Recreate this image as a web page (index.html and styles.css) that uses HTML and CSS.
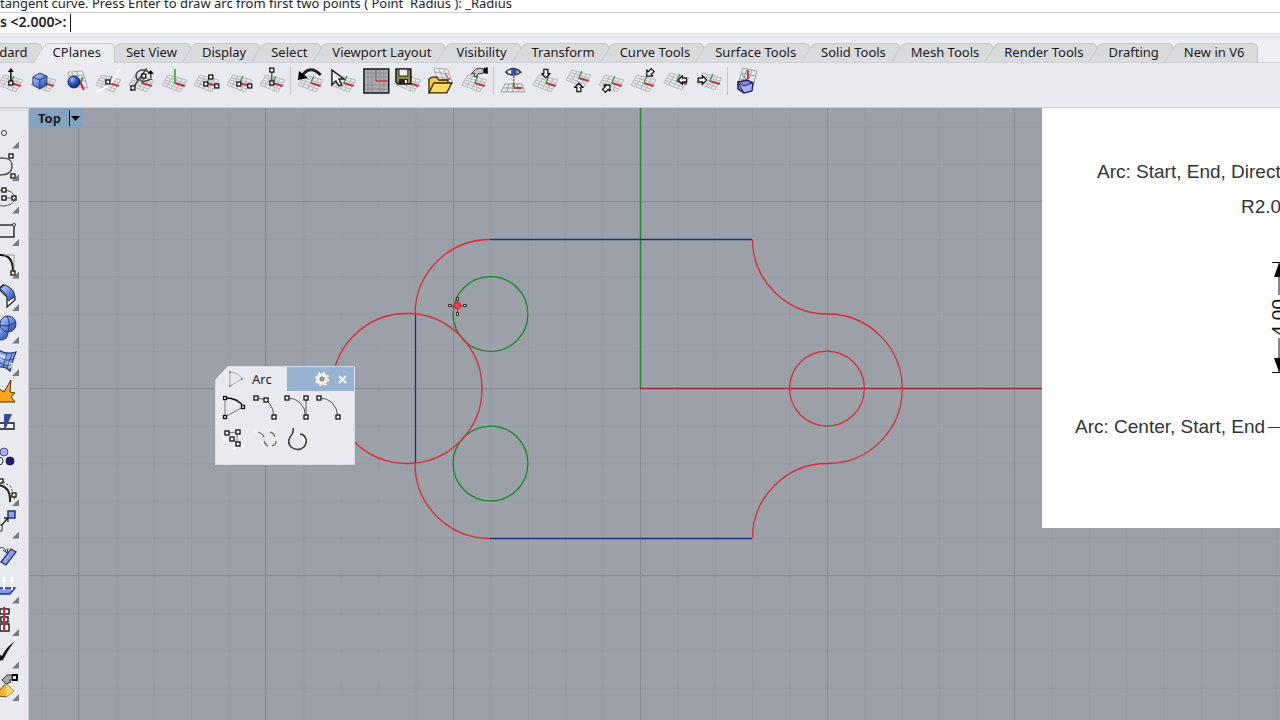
FILE: index.html
```
<!DOCTYPE html>
<html lang="en">
<head>
<meta charset="utf-8">
<title>Rhinoceros - Top</title>
<link rel="stylesheet" href="styles.css">
</head>
<body>
<svg class="defs" aria-hidden="true">
  <defs>
    <symbol id="mesh" viewBox="0 0 33 32">
      <path d="M10 10l19 5-7 12-18-7zM8.500 12.500l19 5.500M7 15l18.500 6M5.500 17.500l18 6.500M15 11.500l-6.500 10.500M20 12.500l-6.500 11.500M24.500 14l-6.500 11.500" fill="none" stroke="#b3b3b7"/>
    </symbol>
    <symbol id="axes" viewBox="0 0 33 32">
      <path d="M17 18l10 3" stroke="#c23440" stroke-width="2"/><path d="M17 18l3-7" stroke="#3da648" stroke-width="1.500"/>
    </symbol>
    <symbol id="plane" viewBox="0 0 33 32"><use href="#mesh"/><use href="#axes"/></symbol>
    <symbol id="arrow" viewBox="0 0 10 10"><path d="M3 .7h4v4.300h2.200L5 9.300.8 5H3z" fill="#fff" stroke="#111" stroke-width="1.300"/></symbol>
    <linearGradient id="blue" x1="0" y1="0" x2="1" y2="1"><stop offset="0" stop-color="#c6d6ff"/><stop offset=".5" stop-color="#6c8fe6"/><stop offset="1" stop-color="#1c3c9c"/></linearGradient>
    <radialGradient id="ball" cx=".35" cy=".3" r=".8"><stop offset="0" stop-color="#a9c4ff"/><stop offset=".4" stop-color="#3560cc"/><stop offset="1" stop-color="#0b1c62"/></radialGradient>
    <pattern id="minor" x="640" y="388.500" width="37.400" height="37.400" patternUnits="userSpaceOnUse"><path d="M0 0H37.400M0 0V37.400" stroke="#8c929b" stroke-width="1.500"/></pattern>
  </defs>
</svg>

<div class="app">
  <section class="command">
    <p class="history">tangent curve. Press Enter to draw arc from first two points ( Point&nbsp; Radius ): _Radius</p>
    <div class="prompt"><label for="cmd">s &lt;2.000&gt;:</label><input id="cmd" type="text"></div>
  </section>

  <nav class="tabs">
    <button class="tab">Standard</button><button class="tab active">CPlanes</button><button class="tab">Set View</button><button class="tab">Display</button><button class="tab">Select</button><button class="tab">Viewport Layout</button><button class="tab">Visibility</button><button class="tab">Transform</button><button class="tab">Curve Tools</button><button class="tab">Surface Tools</button><button class="tab">Solid Tools</button><button class="tab">Mesh Tools</button><button class="tab">Render Tools</button><button class="tab">Drafting</button><button class="tab">New in V6</button>
  </nav>

  <div class="toolbar">
    <button aria-label="Set CPlane origin"><svg viewBox="0 0 33 32"><use href="#plane"/><path d="M17 17V5" stroke="#111" stroke-width="1.500"/><path d="M14 7l3-4 3 4z"/><rect class="n" x="15" y="16" width="4" height="4"/></svg></button>
    <button aria-label="CPlane to object"><svg viewBox="0 0 33 32"><use href="#plane"/><path d="M6 12l7-4 7 3v9l-7 4-7-4z" fill="url(#blue)" stroke="#24346f"/><path d="M6 12l7 3 7-4M13 15v9" fill="none" stroke="#24346f"/></svg></button>
    <button aria-label="CPlane to surface"><svg viewBox="0 0 33 32"><path d="M9 7l15-1 5 17-17-2zM10 11l15-1M11 15l16 1M13 7l4 15M18 7l5 15" fill="none" stroke="#aaa"/><path d="M21 16l4 9" stroke="#c22" stroke-width="2"/><path d="M22 17l2-5" stroke="#393" stroke-width="2"/><circle cx="15" cy="17" r="6" fill="url(#ball)" stroke="#14245c"/></svg></button>
    <button aria-label="CPlane perpendicular to curve"><svg viewBox="0 0 33 32"><use href="#plane"/><path d="M4 27q14-3 24-23" fill="none" stroke="#fff" stroke-width="2"/><rect class="n" x="14" y="15" width="4" height="4"/></svg></button>
    <button aria-label="CPlane along curve"><svg viewBox="0 0 33 32"><use href="#plane"/><path d="M6 26L22 3M13 16q-5-8 3-11 6-1 10 4v4M14 14l4 3 9-3" fill="none" stroke="#444" stroke-width="1.500"/><path d="M23 9h6l-3-4z"/><rect class="n" x="6" y="21" width="4" height="4"/><rect class="n" x="17" y="9" width="4" height="4"/></svg></button>
    <button aria-label="World Top"><svg viewBox="0 0 33 32"><use href="#mesh"/><path d="M17 18l10 3" stroke="#c22" stroke-width="2"/><path d="M17 18V4" stroke="#49b044" stroke-width="2"/></svg></button>
    <button aria-label="CPlane three points"><svg viewBox="0 0 33 32"><use href="#plane"/><rect class="n" x="14" y="17" width="4" height="4"/><rect class="n" x="19" y="10" width="4" height="4"/><rect class="n" x="25" y="19" width="4" height="4"/></svg></button>
    <button aria-label="CPlane X axis"><svg viewBox="0 0 33 32"><use href="#plane"/><rect class="n" x="14" y="17" width="4" height="4"/><rect class="n" x="25" y="19" width="4" height="4"/></svg></button>
    <button aria-label="CPlane Z axis"><svg viewBox="0 0 33 32"><use href="#plane"/><path d="M16 17V6" stroke="#222"/><rect class="n" x="14" y="3" width="4" height="4"/><rect class="n" x="14" y="16" width="4" height="4"/></svg></button>
    <span class="sep"></span>
    <button aria-label="Previous CPlane"><svg viewBox="0 0 33 32"><use href="#plane"/><path d="M27 10Q16-1 8 11" fill="none" stroke="#222" stroke-width="3"/><path d="M5 6l9 7-10 2z"/></svg></button>
    <button aria-label="Select CPlane"><svg viewBox="0 0 33 32"><use href="#plane"/><path d="M5 5v15l4-4 3 5 3-1-3-6h5z" fill="#fff" stroke="#222" stroke-width="1.500"/></svg></button>
    <button aria-label="Named CPlanes"><svg viewBox="0 0 33 32"><path d="M4 4h25v24H4z" fill="#a9abb1" stroke="#171717" stroke-width="1.500"/><path d="M8 5v22M12 5v22M20 5v22M24 5v22M5 8h23M5 12h23M5 20h23M5 24h23" stroke="#85878c" stroke-width=".7"/><path d="M16 5v11" stroke="#38a33e" stroke-width="1.500"/><path d="M16 16h12" stroke="#c83b42" stroke-width="1.500"/></svg></button>
    <button aria-label="Save CPlane"><svg viewBox="0 0 33 32"><use href="#plane"/><path d="M4 4h15v15H6l-2-2z" fill="#8e8e43" stroke="#171717" stroke-width="1.500"/><path d="M7 4h9v7H7z" fill="#eee" stroke="#222"/><path d="M7 14h9v5H7z" fill="#222"/><path d="M13 15h2v3h-2z" fill="#eee"/></svg></button>
    <button aria-label="Open CPlane"><svg viewBox="0 0 33 32"><path d="M9 3l14 1 5 15-15-2zM10 7l15 2M12 12l15 2M14 4l6 14M19 4l6 14" fill="#eee" stroke="#aaa"/><path d="M20 9l5 6" stroke="#b33"/><path d="M4 28V14l3-2h5l2 3h9v5" fill="#f2cb42" stroke="#332600" stroke-width="1.300"/><path d="M4 28l5-10h18l-5 10z" fill="#ffda62" stroke="#332600" stroke-width="1.300"/></svg></button>
    <button aria-label="Edit CPlane"><svg viewBox="0 0 33 32"><use href="#plane"/><path d="M13 9l5-5q4-2 8 0v4l-6 1-1 3-3-1 1-3z" fill="#c4c4c8" stroke="#333"/><path d="M26 3l4-1v7l-4-1z"/></svg></button>
    <span class="sep"></span>
    <button aria-label="CPlane to view"><svg viewBox="0 0 33 32"><path d="M8 19h17l3 8H4zM6 23h21M12 19l-2 8M16 19v8M20 19l2 8" fill="none" stroke="#999"/><path d="M17 11v12" stroke="#222" stroke-dasharray="2 1"/><path d="M17 22v-4" stroke="#393" stroke-width="2"/><path d="M17 23h8" stroke="#b33" stroke-width="2"/><path d="M9 7q7-7 15 0-8 6-15 0z" fill="#fff" stroke="#333" stroke-width="1.500"/><circle cx="17" cy="7" r="3" fill="#314fb0"/></svg></button>
    <button aria-label="World top"><svg viewBox="0 0 33 32"><use href="#plane"/><use href="#arrow" x="12" y="3" width="10" height="11"/></svg></button>
    <button aria-label="World bottom"><svg viewBox="0 0 33 32"><use href="#plane" y="-5" width="33" height="32"/><g transform="rotate(180 17 23)"><use href="#arrow" x="12" y="18" width="10" height="11"/></g></svg></button>
    <button aria-label="World front"><svg viewBox="0 0 33 32"><use href="#plane"/><g transform="rotate(-135 12 23)"><use href="#arrow" x="7" y="18" width="10" height="10"/></g></svg></button>
    <button aria-label="World back"><svg viewBox="0 0 33 32"><use href="#plane"/><g transform="rotate(45 23 8)"><use href="#arrow" x="18" y="3" width="10" height="10"/></g></svg></button>
    <button aria-label="World right"><svg viewBox="0 0 33 32"><use href="#plane" y="-2" width="33" height="32"/><g transform="rotate(90 23 15)"><use href="#arrow" x="18" y="10" width="10" height="11"/></g></svg></button>
    <button aria-label="World left"><svg viewBox="0 0 33 32"><use href="#plane" y="-2" width="33" height="32"/><g transform="rotate(-90 9 15)"><use href="#arrow" x="4" y="10" width="10" height="11"/></g></svg></button>
    <span class="sep"></span>
    <button aria-label="Universal CPlanes"><svg viewBox="0 0 33 32"><path d="M12 3l14 3-4 17-15-4zM11 8l14 3M9 14l14 3M16 4l-5 15M21 5l-5 16" fill="#eee" stroke="#999"/><path d="M17 5v9" stroke="#b33" stroke-width="2"/><path d="M11 9l5 6" stroke="#393"/><path d="M7 17l9-2 6 3-1 8-8 2-6-4z" fill="#8284df" stroke="#202354" stroke-width="1.500"/><path d="M7 17l6 4 9-3-1 8-8 2z" fill="#aaaeff" stroke="#202354"/></svg></button>
  </div>

  <main class="workspace">
    <aside class="side">
      <button class="more" aria-label="Point"><svg viewBox="0 0 29 32"><circle cx="4" cy="16" r="2.500" fill="#fff" stroke="#333"/></svg></button>
      <button class="more" aria-label="Curve"><svg viewBox="0 0 29 32"><path d="M0 8q12-1 12 8t-12 9" fill="none" stroke="#555" stroke-width="1.500"/><rect class="n" x="9" y="4" width="4" height="4"/><rect class="n" x="11" y="24" width="4" height="4"/></svg></button>
      <button class="more" aria-label="Ellipse"><svg viewBox="0 0 29 32"><ellipse cx="3" cy="16" rx="12" ry="8" fill="none" stroke="#555"/><path d="M4 16h10" stroke="#555"/><rect class="n" x="2" y="6" width="4" height="4"/><rect class="n" x="2" y="14" width="4" height="4"/><rect class="n" x="12" y="14" width="4" height="4"/></svg></button>
      <button class="more" aria-label="Rectangle"><svg viewBox="0 0 29 32"><path d="M-2 10h16v12H-2z" fill="none" stroke="#333" stroke-width="1.500"/><circle cx="14" cy="10" r="1.500" fill="#fff" stroke="#333"/></svg></button>
      <button class="more" aria-label="Fillet"><svg viewBox="0 0 29 32"><path d="M-1 8q14-1 14 16" fill="none" stroke="#111" stroke-width="2"/><path d="M4 8h10v15" fill="none" stroke="#999"/><rect class="n" x="11" y="24" width="4" height="4"/></svg></button>
      <button class="more" aria-label="Surface"><svg viewBox="0 0 29 32"><path d="M-1 9l4-4q12 3 12 15l-8 7V17z" fill="#fff" stroke="#222" stroke-width="1.300"/><path d="M0 9l5-4q9 4 10 12l-7 4Q7 13 0 9z" fill="url(#blue)" stroke="#263b79"/></svg></button>
      <button class="more" aria-label="Solid"><svg viewBox="0 0 29 32"><circle cx="1" cy="21" r="7" fill="url(#blue)" stroke="#24346f"/><circle cx="8" cy="12" r="8" fill="url(#blue)" stroke="#24346f"/><path d="M1 13q7 3 14-3M7 4q4 7 1 16" fill="none" stroke="#24346f"/></svg></button>
      <button class="more" aria-label="Mesh"><svg viewBox="0 0 29 32"><path d="M-1 5q7 5 17 2-3 7-6 19-5-5-11-4z" fill="#86a3ee" stroke="#24346f" stroke-width="1.300"/><path d="M0 9l7 2-2 5-5-1zM8 17l5 1-2 5-4-2z" fill="#d3deff"/><path d="M-1 12q6 5 14 2M-1 17q6 5 12 3M7 8L3 22M12 8L7 23" fill="none" stroke="#24346f" stroke-width=".8"/></svg></button>
      <button aria-label="Explode"><svg viewBox="0 0 29 32"><path d="M-1 12l5 3 7-12-1 12 5 1-4 4 4 5H-1z" fill="#fda51b" stroke="#3b301c"/></svg></button>
      <button aria-label="Trim"><svg viewBox="0 0 29 32"><path d="M-2 13h16v6H-2z" fill="#fff" stroke="#111" stroke-width="1.300"/><path d="M4 4h8L6 18H4z" fill="#354f9e"/></svg></button>
      <button aria-label="Group"><svg viewBox="0 0 29 32"><circle cx="4" cy="10" r="4" fill="#aaa9ef" stroke="#53528d"/><circle cx="-1" cy="19" r="4" fill="#fff" stroke="#333"/><circle cx="10" cy="19" r="4" fill="#221f73" stroke="#15144e"/></svg></button>
      <button class="more" aria-label="Control points"><svg viewBox="0 0 29 32"><path d="M-1 10q12 2 11 17" fill="none" stroke="#222" stroke-width="2"/><path d="M0 4l11 8 4 13" fill="none" stroke="#333" stroke-dasharray="2 2"/><rect class="n" x="-1" y="4" width="4" height="4"/><rect class="n" x="12" y="18" width="4" height="4"/></svg></button>
      <button class="more" aria-label="Scale"><svg viewBox="0 0 29 32"><path d="M0 20l8-9M4 11h4v4" fill="none" stroke="#222" stroke-width="1.300"/><path d="M8 4h7v7H8z" fill="#86a3f2" stroke="#24346f" stroke-width="1.500"/><path d="M-2 18h4v6h-4z" fill="#fff" stroke="#222"/></svg></button>
      <button aria-label="Rotate"><svg viewBox="0 0 29 32"><path d="M1 22L11 9l5 3L6 25z" fill="#8aa3e8" stroke="#24346f" stroke-width="1.300"/><path d="M-1 8q6-2 7 4M3 10l4 3 1-5" fill="none" stroke="#333"/></svg></button>
      <button class="more" aria-label="Project"><svg viewBox="0 0 29 32"><path d="M-1 16h16l-5 6H-1z" fill="#799aeb" stroke="#24346f" stroke-width="1.300"/><path d="M4 18V5M12 18V5" stroke="#fff" stroke-width="2"/></svg></button>
      <button class="more" aria-label="Align"><svg viewBox="0 0 29 32"><path d="M0 4h9v5H0zM1 12h7v5H1zM0 19h9v7H0z" fill="#fff" stroke="#222" stroke-width="1.500"/><path d="M4 2v25" stroke="#e21d2f" stroke-width="2"/></svg></button>
      <button class="more" aria-label="Check"><svg viewBox="0 0 29 32"><path d="M-1 17l3 2Q7 9 14 5 8 13 3 23L-1 24z" fill="#171717"/></svg></button>
      <button class="more" aria-label="Edit object"><svg viewBox="0 0 29 32"><path d="M-1 21l7-8 8 8-8 6-7-1z" fill="#f9b62c" stroke="#694d0b"/><path d="M6 13v14l8-6z" fill="#ffd474"/><path d="M2 10l5-5h5v5H9l2 2-5 2z" fill="#aaa" stroke="#333"/><path d="M12 4h6v7h-6z"/><path d="M13 6h3v3h-3z" fill="#fff"/></svg></button>
    </aside>

    <section class="viewport">
      <svg class="canvas" viewBox="29 108 1251 612" preserveAspectRatio="xMinYMin slice" role="img" aria-label="Top view drawing">
        <rect x="29" y="108" width="1251" height="612" fill="url(#minor)" opacity=".5"/>
        <path d="M78.500 108v612M265.500 108v612M453.500 108v612M827.500 108v612M1014.500 108v612M640.500 388v332M29 201.500h1251M29 575.500h1251M29 388.500h611" stroke="#838992"/>
        <path d="M640.500 108v280" stroke="#1b8c27" stroke-width="1.500"/>
        <path d="M640 388.500h640" stroke="#a12a34" stroke-width="1.500"/>
        <g fill="none" stroke-width="1.300">
          <path d="M490 239.500h262M490 538.500h262M415.500 314v149" stroke="#1c3182"/>
          <g stroke="#108c22"><circle cx="490.500" cy="314" r="37.400"/><circle cx="490.500" cy="463.500" r="37.400"/></g>
          <g stroke="#e02630">
            <path d="M490 239.500a75 75 0 0 0-75 75M415 463.500a75 75 0 0 0 75 75M752.500 239.500a75 75 0 0 0 75 74.500a74 74 0 0 1 0 149.500a75 75 0 0 0-75 75"/>
            <circle cx="407" cy="388.500" r="75"/><circle cx="827" cy="388.500" r="37.400"/>
          </g>
        </g>
        <path d="M450 306h14M457.500 299v14" stroke="#ec1c28"/><circle cx="457.500" cy="305.500" r="3" fill="#f07a80" stroke="#ec1c28" stroke-width="1.500"/><path d="M454 305.500h7M457.500 302v7" stroke="#ec1c28"/>
        <path d="M448.500 304.500h3v2h-3zM463.500 304.500h3v2h-3zM456.500 297.500h2v3h-2zM456.500 312.500h2v3h-2z" fill="#fff" stroke="#222"/>
      </svg>

      <button class="view-title"><span>Top</span><svg viewBox="0 0 12 16"><path d="M.5 0v16" stroke="#17202c"/><path d="M2 6h9L6.500 11z"/></svg></button>

      <figure class="reference">
        <svg viewBox="0 0 238 420" font-family="Liberation Sans, sans-serif" font-size="19" fill="#333">
          <text x="55" y="70">Arc: Start, End, Direct</text>
          <text x="199" y="105">R2.0</text>
          <text x="33" y="325">Arc: Center, Start, End</text>
          <path d="M226 319.500h12" stroke="#333"/>
          <path d="M230 154.500h8M230 264.500h8M237 155v32M237 230v34" stroke="#111" fill="none"/>
          <path d="M237 155l-5 14h10zM237 264l-5-14h10z" fill="#000"/>
          <text transform="translate(243 228) rotate(-90)" fill="#111">4.00</text>
        </svg>
      </figure>

      <section class="palette">
        <header>
          <h2><svg viewBox="0 0 16 18"><path d="M2 2q9 1 12 7L2 16z" fill="none" stroke="#aaa"/><circle cx="2" cy="2" r="1" fill="#777"/><circle cx="14" cy="9" r="1" fill="#777"/><circle cx="2" cy="16" r="1" fill="#777"/></svg>Arc</h2>
          <div class="bar">
            <button aria-label="Options"><svg viewBox="0 0 16 16"><circle cx="8" cy="8" r="6" fill="none" stroke="#77736b" stroke-width="3" stroke-dasharray="2.700 2"/><circle cx="8" cy="8" r="4" fill="none" stroke="#f4efe3" stroke-width="4"/><circle cx="8" cy="8" r="6.500" fill="none" stroke="#f4efe3" stroke-width="2" stroke-dasharray="2.700 2.400"/><circle cx="8" cy="8" r="2" fill="#97aecb" stroke="#77736b"/></svg></button>
            <button aria-label="Close"><svg viewBox="0 0 16 16"><path d="M5 5l7 7M12 5l-7 7" stroke="#eef4ff" stroke-width="2"/></svg></button>
          </div>
        </header>
        <div class="tools">
          <button aria-label="Arc: center, start, angle"><svg viewBox="0 0 32 32"><path d="M7 26V7M7 26l18-10" fill="none" stroke="#777"/><path d="M7 7q14 0 18 9" fill="none" stroke="#111" stroke-width="1.500"/><rect class="n" x="5.500" y="5.500" width="3" height="3"/><rect class="n" x="23.500" y="14.500" width="3" height="3"/><rect class="n" x="5.500" y="24.500" width="3" height="3"/></svg></button>
          <button aria-label="Arc: three points"><svg viewBox="0 0 32 32"><path d="M6 7q17 0 18 19" fill="none" stroke="#555"/><rect class="n" x="4" y="5" width="4" height="4"/><rect class="n" x="14" y="7" width="4" height="4"/><rect class="n" x="22" y="24" width="4" height="4"/></svg></button>
          <button aria-label="Arc: start, end, direction"><svg viewBox="0 0 32 32"><path d="M5 7q17 0 19 19V7" fill="none" stroke="#555"/><rect class="n" x="3" y="5" width="4" height="4"/><rect class="n" x="22" y="5" width="4" height="4"/><rect class="n" x="22" y="24" width="4" height="4"/></svg></button>
          <button aria-label="Arc: start, end, radius"><svg viewBox="0 0 32 32"><path d="M5 7q17 0 19 19" fill="none" stroke="#555"/><rect class="n" x="3" y="5" width="4" height="4"/><rect class="n" x="22" y="24" width="4" height="4"/></svg></button>
          <button aria-label="Arc through points"><svg viewBox="0 0 32 32"><path d="M4 14l4-1M13 4l1 3M5 18l4-2M16 27l1-4M24 22l3 2" stroke="#fff" stroke-width="2"/><path d="M9 10l10-1v11l-6-5" fill="none" stroke="#777"/><rect class="n" x="7" y="8" width="4" height="4"/><rect class="n" x="18" y="7" width="4" height="4"/><rect class="n" x="12" y="14" width="4" height="4"/><rect class="n" x="18" y="19" width="4" height="4"/></svg></button>
          <button aria-label="Arc blend"><svg viewBox="0 0 32 32"><path d="M4 8q8 1 9 8M27 16q-1-7-8-9M12 18l3 5M26 18l-3 5" fill="none" stroke="#fff" stroke-width="2"/><path d="M8 9q5 2 6 5M14 18q1 4 4 5M22 23q4-1 4-5M25 14q-1-4-5-5" fill="none" stroke="#666" stroke-width="1.300"/></svg></button>
          <button aria-label="Convert to arcs"><svg viewBox="0 0 32 32"><path d="M14 12a6 6 0 0 1 8 8" fill="none" stroke="#fff" stroke-width="3"/><path d="M11 5q1 5-3 9-3 6 1 10 7 5 13 0 4-5 1-10-2-3-5-3" fill="none" stroke="#333" stroke-width="1.500"/></svg></button>
        </div>
      </section>
    </section>
  </main>
</div>
</body>
</html>
```
FILE: styles.css
```
* { box-sizing: border-box; }
body { margin: 0; background: #e9eaf0; color: #1d1d1f; font-family: "Noto Sans", "Open Sans", sans-serif; font-size: 13px; overflow: hidden; }
button { border: 0; padding: 0; background: none; color: inherit; font: inherit; }
svg { display: block; }
.defs { position: absolute; width: 0; height: 0; }
.n { fill: #fff; stroke: #111; stroke-width: 1.3px; }
.app { display: flex; flex-direction: column; height: 100vh; }

.command { background: #fff; border-bottom: 1px solid #dddee3; }
.history { margin: 0; height: 13px; line-height: 18px; display: flex; align-items: flex-end; white-space: pre; border-bottom: 1px solid #c9cacd; overflow: hidden; }
.prompt { display: flex; align-items: center; height: 20px; gap: 4px; font-size: 14px; font-weight: 600; }
.prompt label { line-height: 16px; padding-bottom: 2px; }
.prompt input { flex: 1; height: 18px; border: 0; border-left: 1px solid #111; padding: 0 2px; background: none; outline: 0; font: inherit; }

.tabs { display: flex; margin-top: 3px; padding-top: 5px; margin-left: -48px; border-top: 1px solid #d9dae1; border-bottom: 1px solid #cfd0d8; background: #eeeff4; }
.tab { position: relative; isolation: isolate; flex: none; height: 19px; margin-right: -9px; padding: 0 14px 0 20px; line-height: 19px; white-space: nowrap; --face: #d9dadc; }
.tab::before, .tab::after { content: ""; position: absolute; z-index: -1; top: 0; bottom: 0; background: var(--face); border: 0 solid #c5c7cc; border-top-width: 1px; }
.tab::before { left: 0; right: 50%; border-left-width: 1px; border-top-left-radius: 4px; transform: skewX(-32deg); transform-origin: 0 100%; }
.tab::after { left: 50%; right: 0; border-right-width: 1px; border-top-right-radius: 5px; }
.tab.active { z-index: 1; height: 20px; margin-bottom: -1px; padding-bottom: 1px; --face: #ebecf2; }

.toolbar { display: flex; align-items: center; width: 770px; height: 44px; padding-bottom: 9px; margin-left: -6px; }
.toolbar button { flex: 1; min-width: 0; height: 32px; }
.toolbar svg { width: 100%; height: 32px; }
.sep { flex: none; width: 1px; height: 28px; margin: 0 3px 0 2px; background: #c4c5ca; }

.workspace { display: flex; flex: 1; min-height: 0; border-top: 1px solid #c6cad3; }
.side { display: flex; flex-direction: column; width: 29px; padding: 6px 0 18px; border-top: 3px double #d4d6dc; border-right: 1px solid #c2cad6; }
.side button { position: relative; flex: 1; min-height: 0; }
.side svg { width: 29px; height: 32px; }
.more::after { content: ""; position: absolute; left: 12px; bottom: 1px; width: 7px; height: 7px; background: #77797e; clip-path: polygon(100% 0, 100% 100%, 0 100%); }

.viewport { position: relative; flex: 1; min-width: 0; overflow: hidden; background: #9ba0a9; }
.canvas { width: 100%; height: 100%; }
.view-title { position: absolute; left: 0; top: 0; display: flex; align-items: center; gap: 8px; height: 20px; padding: 0 2px 0 9px; background: #86a2c0; font-weight: 700; }
.view-title svg { width: 12px; height: 16px; }
.reference { position: absolute; right: 0; top: 0; width: 238px; margin: 0; background: #fff; overflow: hidden; }

.palette { position: absolute; left: 186px; top: 258px; width: 140px; padding-bottom: 9px; background: #e9eaf0; border: 1px solid #d5dae4; clip-path: polygon(0 14px, 13px 0, 100% 0, 100% 100%, 0 100%); }
.palette header { display: flex; height: 24px; }
.palette h2 { display: flex; align-items: center; gap: 8px; width: 71px; margin: 0; padding-left: 12px; font-size: 13px; font-weight: 400; }
.palette h2 svg { width: 16px; height: 18px; }
.bar { display: flex; flex: 1; align-items: center; justify-content: flex-end; gap: 4px; padding-right: 4px; background: #98b2d4; }
.bar svg { width: 16px; height: 16px; }
.tools { display: grid; grid-template-columns: repeat(4, 32px); padding-left: 2px; }
.tools button, .tools svg { width: 32px; height: 32px; }
```
